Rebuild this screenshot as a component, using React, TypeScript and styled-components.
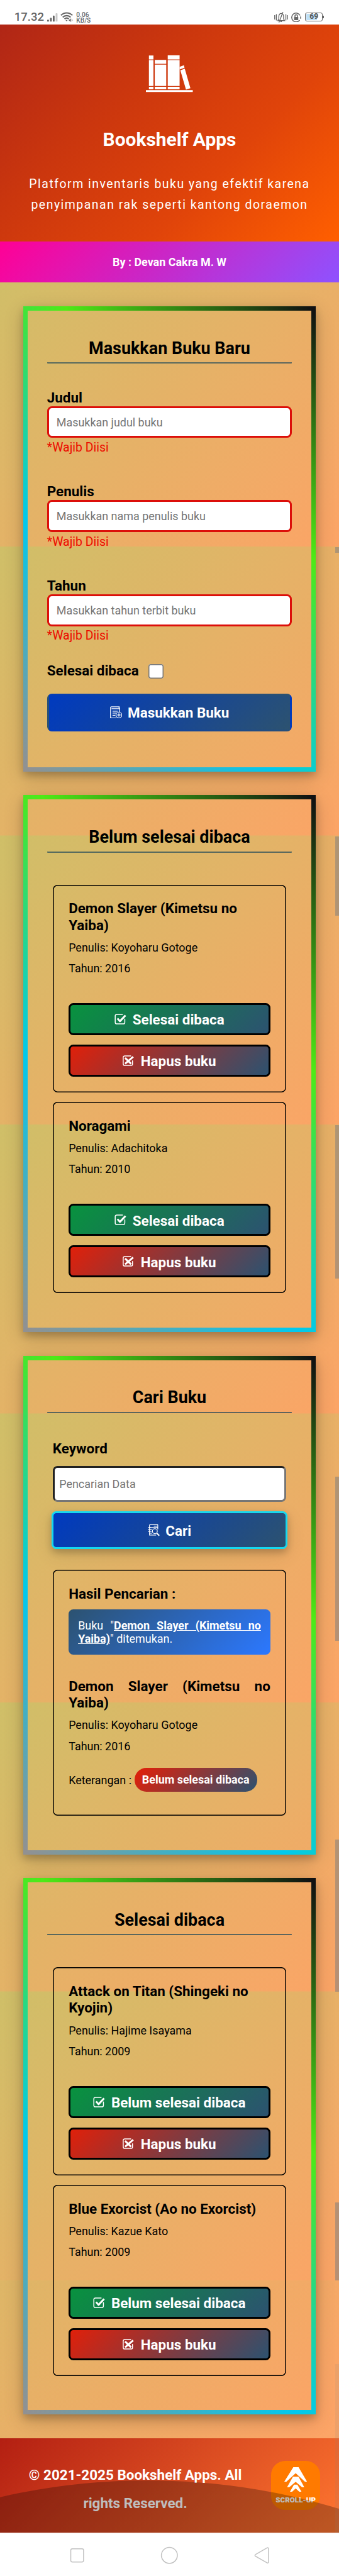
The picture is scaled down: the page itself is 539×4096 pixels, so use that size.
import React from 'react';
import styled, { createGlobalStyle, css } from 'styled-components';

/* One layout unit of the 360-unit-wide phone viewport, in pixels. */
const UNIT = 1.4963;
const u = (...values: number[]) => values.map((v) => `${(v * UNIT).toFixed(2)}px`).join(' ');

const GlobalStyle = createGlobalStyle`
  *, *::before, *::after { box-sizing: border-box; }
  body { margin: 0; background: #fff; }
  h1, h2, h3, p { margin: 0; }
  body, input, button { font-family: Roboto, "Liberation Sans", sans-serif; }
`;

const Page = styled.div`
  position: relative;
  width: 100%;
  height: 4096px;
  overflow: hidden;
  background: #fff;
  color: #000;
  display: flex;
  flex-direction: column;
`;

/* ---------- status bar ---------- */
const StatusBar = styled.div`
  flex: none;
  height: ${u(26)};
  padding: ${u(12.8, 17.3, 0, 15.2)};
  display: flex;
  align-items: flex-start;
  color: #666;
`;
const Clock = styled.span`
  font-size: ${u(12.4)};
  line-height: ${u(12)};
  font-weight: 500;
  width: ${u(35)};
  white-space: nowrap;
`;
const Speed = styled.span`
  flex: 1;
  font-size: ${u(6.8)};
  line-height: ${u(6)};
  font-weight: 500;
  margin-left: ${u(3)};
`;
const Battery = styled.span`
  position: relative;
  width: ${u(18.6)};
  height: ${u(9.8)};
  margin: ${u(0.3, 0, 0, 4.4)};
  border: 1px solid #666;
  border-radius: ${u(2)};
  background: linear-gradient(90deg, #bfe0f7 68%, #fff 68%);
  background-clip: content-box;
  padding: 1px;
  font-size: ${u(8)};
  line-height: ${u(8.6)};
  font-weight: 700;
  text-align: center;
  color: #555;
  display: flex;
  justify-content: center;
  align-items: center;
  &::after {
    content: '';
    position: absolute;
    right: -3px;
    top: ${u(3.2)};
    width: 2px;
    height: ${u(2.4)};
    background: #666;
  }
`;

/* ---------- header ---------- */
const Header = styled.header`
  flex: none;
  height: ${u(230.6)};
  padding-top: ${u(33)};
  display: flex;
  flex-direction: column;
  align-items: center;
  color: #fff;
  background: linear-gradient(135deg, #b02616 0%, #ca360e 33%, #e0440a 66%, #ff5f00 100%);
`;
const AppTitle = styled.h1`
  margin-top: ${u(38.4)};
  font-size: ${u(20)};
  line-height: ${u(23.4)};
  font-weight: 700;
`;
const Tagline = styled.p`
  margin-top: ${u(25.2)};
  font-size: ${u(13)};
  line-height: ${u(21.9)};
  letter-spacing: ${u(1)};
  text-align: center;
  width: ${u(320)};
`;
const Byline = styled.div`
  flex: none;
  height: ${u(43.7)};
  display: flex;
  align-items: center;
  justify-content: center;
  font-size: ${u(12)};
  font-weight: 700;
  color: #fff;
  background: linear-gradient(135deg, #ff0095, #8e52ff);
`;

/* ---------- main ---------- */
/* The backdrop repeats one viewport strip, ending with a shorter strip. */
const Main = styled.main`
  flex: none;
  height: ${u(2290.7)};
  padding: ${u(25.2, 25, 0)};
  display: flex;
  flex-direction: column;
  gap: ${u(25.1)};
  background:
    linear-gradient(135deg, #ddb667, #fca466 92%, #fca567) 0 100% / 100% ${u(167.5)} no-repeat,
    linear-gradient(135deg, #cfbf68, #fca466) 0 ${u(-26.4)} / 100% ${u(307.1)} repeat-y;
`;
const Card = styled.section<{ $h: number }>`
  flex: none;
  height: ${(p) => u(p.$h)};
  padding: ${u(20, 20.3, 0)};
  border: 7px solid;
  border-image: linear-gradient(45deg, #919192, #00c9ee, #4eea16, #111112) 1;
  box-shadow: 0 ${u(4)} ${u(8)} rgba(0, 0, 0, 0.2), 0 ${u(6)} ${u(20)} rgba(0, 0, 0, 0.19);
`;
const CardTitle = styled.h2`
  height: ${u(36.2)};
  padding-top: ${u(10)};
  border-bottom: 2px solid rgba(35, 75, 90, 0.72);
  border-radius: 1px;
  font-size: ${u(18)};
  line-height: ${u(21)};
  font-weight: 700;
  text-align: center;
`;

const Field = styled.div`
  height: ${u(100)};
`;
const Label = styled.label`
  display: block;
  font-size: ${u(15)};
  line-height: ${u(18)};
  font-weight: 700;
`;
const inputBase = css`
  display: block;
  width: 100%;
  border-radius: ${u(5)};
  background: #fff;
  font-size: ${u(12)};
  outline: none;
  &::placeholder { color: #757575; opacity: 1; }
`;
const TextInput = styled.input`
  ${inputBase}
  height: ${u(34)};
  padding: ${u(0, 8)};
  border: 3px solid #dc0f0a;
`;
const SearchInput = styled.input`
  ${inputBase}
  height: ${u(38)};
  margin-top: ${u(9.7)};
  padding: ${u(0, 5)};
  border: 3px solid;
  border-color: #222 #767676 #767676 #222;
`;
const Note = styled.p`
  margin-top: ${u(3)};
  font-size: ${u(13)};
  line-height: ${u(15.2)};
  color: #ec0b00;
`;
const Form = styled.div`
  padding-top: ${u(27.1)};
`;
const CheckRow = styled.div`
  display: flex;
  align-items: center;
  gap: ${u(10.5)};
  height: ${u(18)};
  margin-top: ${u(-9.6)};
`;
const Checkbox = styled.span`
  width: ${u(15.7)};
  height: ${u(15.6)};
  margin-top: ${u(1)};
  border-radius: ${u(2.5)};
  box-shadow: inset 0 0 0 1.5px #767676;
  background: #fff;
`;

const Button = styled.button<{ $tone: 'add' | 'search' | 'done' | 'remove' }>`
  display: flex;
  align-items: center;
  justify-content: center;
  gap: ${u(6)};
  width: 100%;
  height: ${u(34)};
  padding: 0;
  border: 3px solid #000;
  border-radius: ${u(5)};
  color: #fff;
  font-size: ${u(15)};
  line-height: ${u(17.6)};
  font-weight: 700;
  & > span { padding-top: ${u(1.2)}; }
  ${(p) =>
    p.$tone === 'add' &&
    css`
      height: ${u(40)};
      margin-top: ${u(15.2)};
      border-color: transparent;
      background: linear-gradient(135deg, #003abf, #2c5270);
    `}
  ${(p) =>
    p.$tone === 'search' &&
    css`
      width: calc(100% + ${u(2)});
      height: ${u(40.4)};
      margin: ${u(9.7, -1, 21.9)};
      border-color: #16d8ee;
      background: linear-gradient(135deg, #003abf, #2c5270);
      box-shadow: 0 ${u(4)} ${u(8)} rgba(0, 0, 0, 0.2), 0 ${u(6)} ${u(20)} rgba(0, 0, 0, 0.1);
    `}
  ${(p) => p.$tone === 'done' && css`background: linear-gradient(135deg, #08923e, #2c5270);`}
  ${(p) => p.$tone === 'remove' && css`background: linear-gradient(135deg, #e0200a, #2c5270);`}
`;

const Shelf = styled.div<{ $top: number }>`
  padding: ${(p) => u(p.$top, 6, 0)};
  display: flex;
  flex-direction: column;
  gap: ${u(10.2)};
`;
const Item = styled.article`
  padding: ${u(16.5, 17, 16.7)};
  border-radius: ${u(5)};
  box-shadow: inset 0 0 0 1.5px #000;
`;
const BookTitle = styled.h3<{ $justify?: boolean }>`
  font-size: ${u(15)};
  line-height: ${u(17.6)};
  font-weight: 700;
  text-align: ${(p) => (p.$justify ? 'justify' : 'left')};
`;
const Meta = styled.p`
  margin-top: ${u(8)};
  font-size: ${u(12)};
  line-height: ${u(14.1)};
`;
const Actions = styled.div`
  margin-top: ${u(30.1)};
  display: flex;
  flex-direction: column;
  gap: ${u(10.1)};
`;

const Found = styled.p`
  margin: ${u(8.2, 0, 24.4)};
  height: ${u(48.2)};
  padding: ${u(10)};
  border-radius: ${u(5)};
  background: linear-gradient(135deg, #2c5270, #2c78ff);
  color: #fff;
  font-size: ${u(12)};
  line-height: ${u(14.1)};
  text-align: justify;
`;
const FoundTitle = styled.b`
  text-decoration: underline;
`;
const StatusRow = styled.div`
  display: flex;
  align-items: center;
  gap: ${u(3.2)};
  height: ${u(26)};
  margin: ${u(16, 0, 8.2)};
  font-size: ${u(12)};
`;
const StatusBadge = styled.span`
  height: ${u(25.9)};
  padding: ${u(0, 8)};
  line-height: ${u(26)};
  border-radius: ${u(12.5)};
  font-weight: 700;
  color: #fff;
  background: linear-gradient(135deg, #d8220e 8%, #2c5270);
`;

/* ---------- footer ---------- */
const Footer = styled.footer`
  position: relative;
  flex: none;
  height: ${u(100)};
  padding: ${u(24.3, 20, 0, 0)};
  display: flex;
  justify-content: space-between;
  overflow: hidden;
  background: linear-gradient(135deg, #b31f12, #ff7630);
  &::after {
    content: '';
    position: absolute;
    left: ${u(-543)};
    top: ${u(45)};
    width: ${u(1400)};
    height: ${u(1400)};
    border-radius: 50%;
    background: rgba(0, 0, 0, 0.255);
  }
`;
const Copyright = styled.p`
  width: ${u(287.5)};
  padding: ${u(0, 26)};
  font-size: ${u(15)};
  line-height: ${u(30.1)};
  font-weight: 700;
  text-align: center;
  color: #fff;
`;
const ScrollUp = styled.div`
  flex: none;
  width: ${u(52)};
  height: ${u(52)};
  border-radius: ${u(15)};
  background: #ff7a00;
  color: #fff;
  display: flex;
  flex-direction: column;
  align-items: center;
  padding-top: ${u(6.3)};
  font-size: ${u(7.8)};
  line-height: ${u(9)};
  font-weight: 900;
  white-space: nowrap;
`;
const NavBar = styled.nav`
  flex: 1;
  border-top: 1px solid #ecd5d1;
  background: #fff;
`;

const ScrollMark = styled.i<{ $from: number; $to: number; $faint?: boolean }>`
  position: absolute;
  right: 0;
  top: ${(p) => u(p.$from)};
  width: ${u(4)};
  height: ${(p) => u(p.$to - p.$from)};
  background: rgba(128, 128, 128, ${(p) => (p.$faint ? 0.12 : 0.55)});
`;

const Drawing = styled.svg<{ $w: number; $h: number; $gap?: string }>`
  flex: none;
  display: block;
  width: ${(p) => u(p.$w)};
  height: ${(p) => u(p.$h)};
  margin: ${(p) => p.$gap || 0};
`;

const ShelfLogo = () => (
  <Drawing $w={50} $h={39} viewBox="155 59 50 39" fill="#fff">
    <path d="M158.2 59.2h4.8v4.2h-4.8zM158.2 64h4.8v27.6h-4.8zM158.2 92.4h4.8v2.7h-4.8z" />
    <path d="M164.4 63.8h12.2v4.2h-12.2zM164.4 68.8h12.2v22.8h-12.2zM164.4 92.4h12.2v2.7h-12.2z" />
    <path d="M178.2 59h12.6v4.4h-12.6zM178.2 64h12.6v27.6h-12.6zM178.2 92.4h12.6v2.7h-12.6z" />
    <path d="M190.8 71.2l4.6-1.7.6 2.7-5.2 1.8zM191.6 74.8l4.7-1.6 6 20.7-4.7 1.5z" />
    <path d="M155 96h49.8v1.9H155z" />
  </Drawing>
);

const CheckIcon = () => (
  <Drawing $w={13} $h={13} viewBox="0 0 13 13" fill="none" stroke="#fff">
    <path d="M8.6 1.3H2.4A1.6 1.6 0 0 0 .8 2.9v6.9a1.6 1.6 0 0 0 1.6 1.6h7a1.6 1.6 0 0 0 1.6-1.6V6.2" strokeWidth="1" strokeLinecap="round" />
    <path d="M3.2 5.6l2.6 3 5.9-6.3" strokeWidth="2" strokeLinejoin="round" />
  </Drawing>
);

const CrossIcon = () => (
  <Drawing $w={13} $h={13} viewBox="0 0 13 13" fill="none" stroke="#fff">
    <path d="M8.6 1.3H2.2A1.6 1.6 0 0 0 .6 2.9v6.9a1.6 1.6 0 0 0 1.6 1.6h7a1.4 1.4 0 0 0 1.3-1.4V6.6" strokeWidth="1" strokeLinecap="round" />
    <path d="M2.6 3.4l6.4 6.2M2.6 9.6l8.6-7.4" strokeWidth="2" />
  </Drawing>
);

const AddBookIcon = () => (
  <Drawing $w={13} $h={13} viewBox="0 0 13 13" fill="none" stroke="#fff" strokeWidth=".8">
    <path d="M10.2 6V2.6H1.6M10.2.6H1.4a.9.9 0 0 0-.9.9v10.9h6.2M10.2.6l-.8 1 .8 1" />
    <path d="M2.6 5.3h5.6M2.6 7.3h4M2.6 9.6h3" />
    <circle cx="9.4" cy="9.3" r="3.1" />
    <path d="M9.4 7.5v3.6M7.6 9.3h3.6" />
  </Drawing>
);

const SearchBookIcon = () => (
  <Drawing $w={13} $h={13} viewBox="0 0 13 13" fill="none" stroke="#fff" strokeWidth=".8">
    <path d="M10.6.8H2.6a.9.9 0 0 0-.8.9v2.2h8.8M10.6.8v5M10 2.4H6.4M1.8 3.9v8h7" />
    <path d="M.3 3.9h2.6M.3 6h4M.3 8h3.6M1.8 10h2.6" />
    <circle cx="7.5" cy="7.8" r="2.6" />
    <path d="M9.4 9.8l2.8 2.7" strokeWidth="1.4" />
  </Drawing>
);

type Book = { title: string; author: string; year: number };

const BookItem = ({ book, toggle }: { book: Book; toggle: string }) => (
  <Item>
    <BookTitle>{book.title}</BookTitle>
    <Meta>Penulis: {book.author}</Meta>
    <Meta>Tahun: {book.year}</Meta>
    <Actions>
      <Button $tone="done"><CheckIcon /><span>{toggle}</span></Button>
      <Button $tone="remove"><CrossIcon /><span>Hapus buku</span></Button>
    </Actions>
  </Item>
);

const unread: Book[] = [
  { title: 'Demon Slayer (Kimetsu no Yaiba)', author: 'Koyoharu Gotoge', year: 2016 },
  { title: 'Noragami', author: 'Adachitoka', year: 2010 },
];
const finished: Book[] = [
  { title: 'Attack on Titan (Shingeki no Kyojin)', author: 'Hajime Isayama', year: 2009 },
  { title: 'Blue Exorcist (Ao no Exorcist)', author: 'Kazue Kato', year: 2009 },
];
const fields = [
  ['Judul', 'Masukkan judul buku'],
  ['Penulis', 'Masukkan nama penulis buku'],
  ['Tahun', 'Masukkan tahun terbit buku'],
];
const scrollMarks = [
  [581.2, 587.6],
  [888.6, 973],
  [1195.5, 1358.6],
  [1569, 1743.9],
  [1954.5, 2116.4],
  [2340.4, 2423.5],
];

export default function App() {
  return (
    <Page>
      <GlobalStyle />
      <StatusBar>
        <Clock>17.32</Clock>
        <Drawing $w={11.4} $h={10} viewBox="0 0 11.4 10" fill="#666" $gap={u(0.6, 0, 0, 0)}>
          <rect x="0" y="7.6" width="1.9" height="2" rx=".8" />
          <rect x="3" y="5.6" width="1.9" height="4" rx=".8" />
          <rect x="6" y="3.2" width="1.9" height="6.4" rx=".8" />
          <rect x="9" y=".6" width="2" height="9" rx=".8" fill="#c9c9c9" />
        </Drawing>
        <Drawing $w={13.6} $h={11} viewBox="0 0 13.6 11" fill="none" stroke="#666" strokeWidth="1.4" $gap={u(0, 0, 0, 2.9)}>
          <path d="M.6 3.6C4 .1 9.4 .1 12.8 3.6M2.5 5.7c2.4-2.4 6-2.4 8.4 0M4.4 7.5c1.4-1.3 3.2-1.3 4.6 0" />
          <path d="M5.4 8.5h2.4l-1.2 1.6z" fill="#666" stroke="none" />
          <path d="M11.1 6.9v3.7L8.7 8.8z" fill="#666" stroke="none" />
          <path d="M11.7 6.9v3.7l1.9-1.8z" fill="#c9c9c9" stroke="none" />
        </Drawing>
        <Speed>0.06<br />KB/S</Speed>
        <Drawing $w={14.6} $h={11.4} viewBox="0 0 14.6 11.4" fill="none" stroke="#666" strokeWidth=".9">
          <path d="M.5 3.4v4.6M2.3 2.4v6.6M12.4 2.4v6.6M14.1 3.4v4.6" />
          <path d="M3.8 9.2h7.2l-1-1.7V5c0-4.6-5-4.6-5.1 0v2.5zM9.3.2L5 11.2M6.5 10.2h1.6" />
        </Drawing>
        <Drawing $w={10.6} $h={10.4} viewBox="0 0 10.6 10.4" fill="none" stroke="#666" strokeWidth="1" $gap={u(0.3, 0, 0, 3.4)}>
          <path d="M9.4 3A4.7 4.7 0 1 0 9 8M10 4.2v2.4" />
          <rect x="3.1" y="4.7" width="4.4" height="3.3" fill="#666" stroke="none" />
          <path d="M4 4.8V3.6c0-1.6 2.6-1.6 2.6 0v1.2" />
        </Drawing>
        <Battery>69</Battery>
      </StatusBar>

      <Header>
        <ShelfLogo />
        <AppTitle>Bookshelf Apps</AppTitle>
        <Tagline>Platform inventaris buku yang efektif karena penyimpanan rak seperti kantong doraemon</Tagline>
      </Header>
      <Byline>By : Devan Cakra M. W</Byline>

      <Main>
        <Card $h={494.5}>
          <CardTitle>Masukkan Buku Baru</CardTitle>
          <Form>
            {fields.map(([label, hint]) => (
              <Field key={label}>
                <Label>{label}</Label>
                <TextInput placeholder={hint} />
                <Note>*Wajib Diisi</Note>
              </Field>
            ))}
            <CheckRow>
              <Label>Selesai dibaca</Label>
              <Checkbox />
            </CheckRow>
            <Button $tone="add"><AddBookIcon /><span>Masukkan Buku</span></Button>
          </Form>
        </Card>

        <Card $h={570.4}>
          <CardTitle>Belum selesai dibaca</CardTitle>
          <Shelf $top={34.2}>
            {unread.map((b) => <BookItem key={b.title} book={b} toggle="Selesai dibaca" />)}
          </Shelf>
        </Card>

        <Card $h={530.1}>
          <CardTitle>Cari Buku</CardTitle>
          <Shelf $top={29}>
            <div>
              <Label>Keyword</Label>
              <SearchInput placeholder="Pencarian Data" />
              <Button $tone="search"><SearchBookIcon /><span>Cari</span></Button>
              <Item>
                <BookTitle>Hasil Pencarian :</BookTitle>
                <Found>
                  Buku "<FoundTitle>Demon Slayer (Kimetsu no Yaiba)</FoundTitle>" ditemukan.
                </Found>
                <BookTitle $justify>Demon Slayer (Kimetsu no Yaiba)</BookTitle>
                <Meta>Penulis: Koyoharu Gotoge</Meta>
                <Meta>Tahun: 2016</Meta>
                <StatusRow>
                  Keterangan : <StatusBadge>Belum selesai dibaca</StatusBadge>
                </StatusRow>
              </Item>
            </div>
          </Shelf>
        </Card>

        <Card $h={570.2}>
          <CardTitle>Selesai dibaca</CardTitle>
          <Shelf $top={34.2}>
            {finished.map((b) => <BookItem key={b.title} book={b} toggle="Belum selesai dibaca" />)}
          </Shelf>
        </Card>
      </Main>

      <Footer>
        <Copyright>© 2021-2025 Bookshelf Apps. All rights Reserved.</Copyright>
        <ScrollUp>
          <Drawing $w={24.2} $h={26.6} viewBox="0 0 24.2 26.6" fill="#fff" $gap={u(0, 0, 4.7, 0)}>
            <path d="M9.6 0h5.6l9 15.4h-2.3L12.1 6.4 2.3 15.4H0z" />
            <path d="M9.3 10h5.8l6.1 11.2h-2.4L12.1 15.6 5.4 21.2H3z" />
            <path d="M10.3 18.6h3.6l4.5 7.7h-2.2l-4.1-3.8-4 3.8H5.9z" />
          </Drawing>
          SCROLL-UP
        </ScrollUp>
      </Footer>
      <NavBar>
        <Drawing $w={360} $h={45} viewBox="0 2691.5 360 45" fill="none" stroke="#c2c2c2" strokeWidth="1">
          <rect x="75.2" y="2708" width="13.6" height="14" rx="1.6" />
          <circle cx="180" cy="2715" r="8.5" />
          <path d="M283.9 2707l-12.4 7.1a1 1 0 0 0 0 1.8l12.4 7.1a.9.9 0 0 0 1.4-.8v-14.4a.9.9 0 0 0-1.4-.8z" />
        </Drawing>
      </NavBar>

      {scrollMarks.map(([from, to]) => <ScrollMark key={from} $from={from} $to={to} />)}
      <ScrollMark $from={2512} $to={2691} $faint />
    </Page>
  );
}
